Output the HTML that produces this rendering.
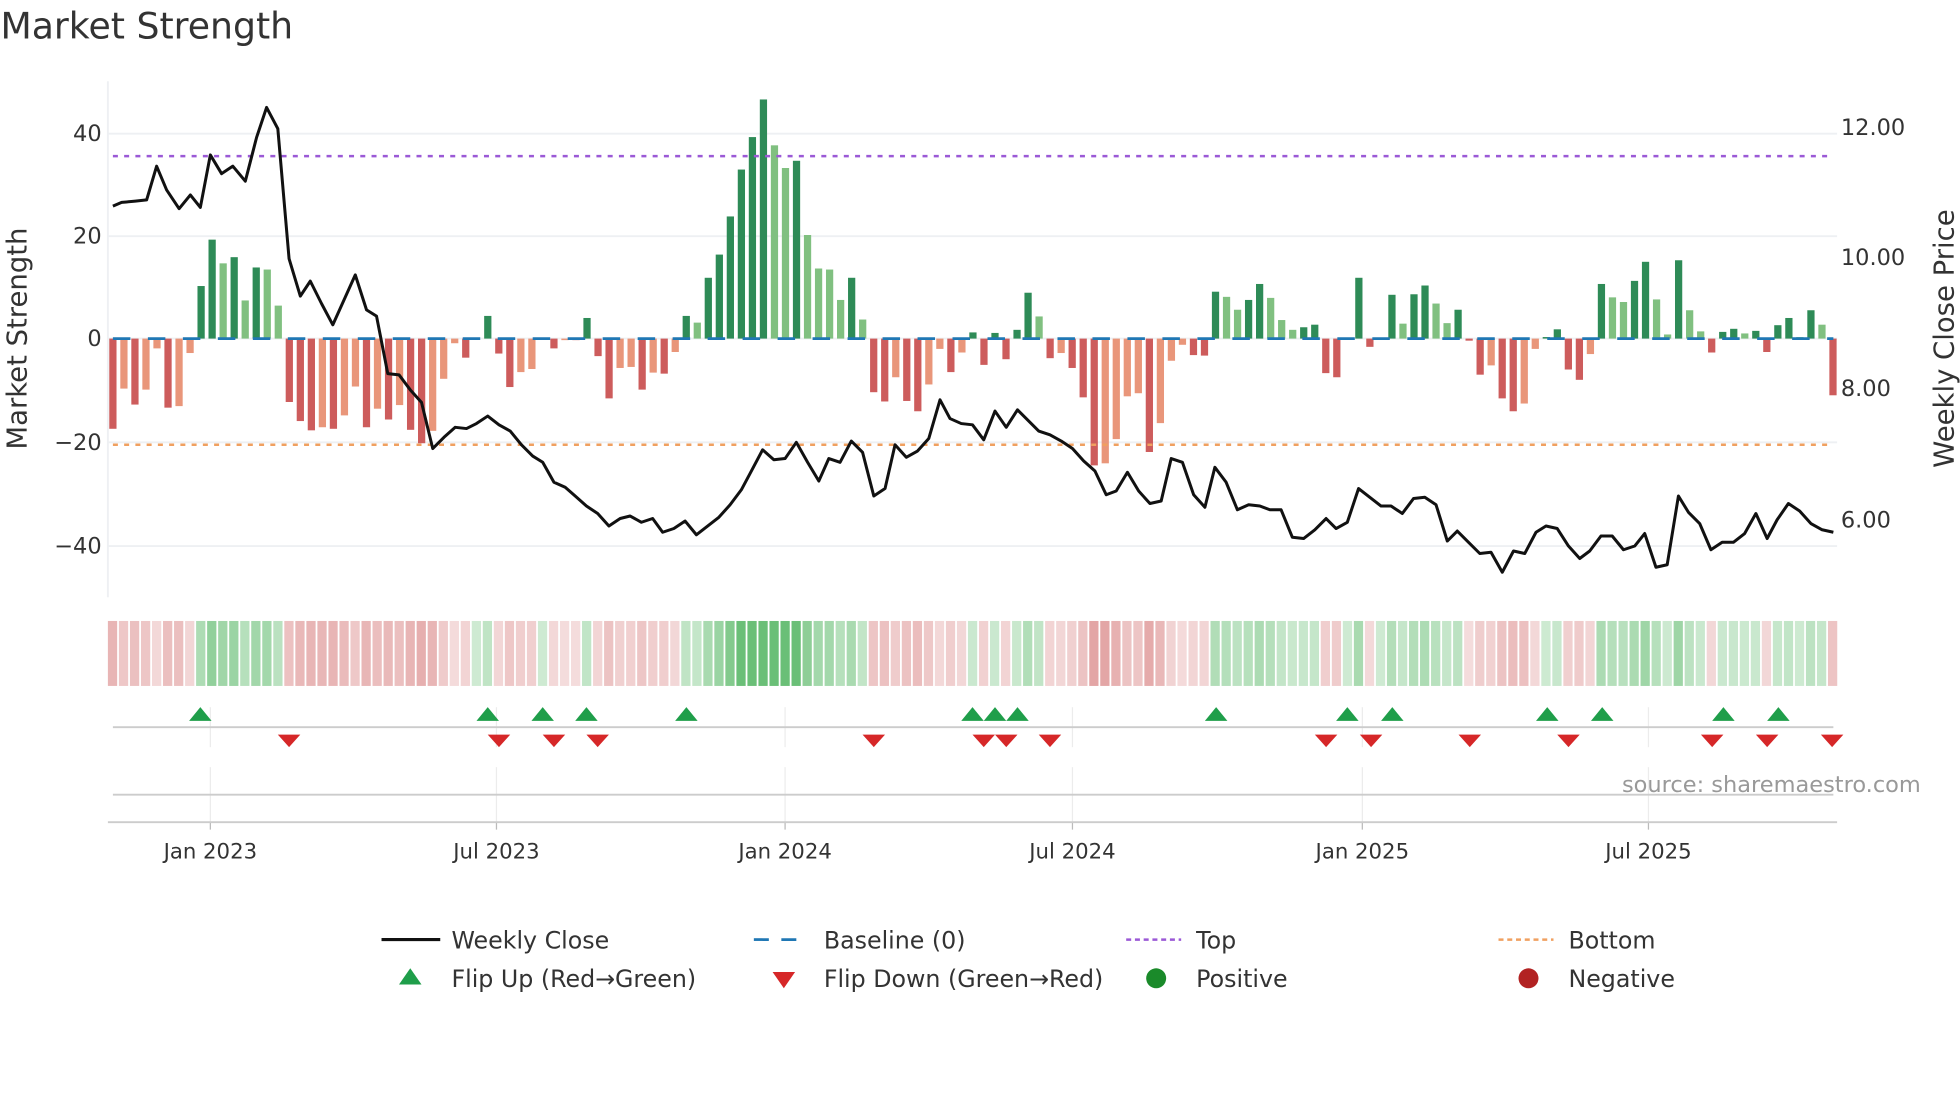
<!DOCTYPE html>
<html><head><meta charset="utf-8"><style>
html,body{margin:0;padding:0;background:#fff;width:1960px;height:1102px;overflow:hidden}
svg{display:block}
text{font-family:"DejaVu Sans","Liberation Sans",sans-serif;fill:#333}
</style></head><body>
<svg id="s" width="1960" height="1102" viewBox="0 0 1568 882" xmlns="http://www.w3.org/2000/svg">
<text x="0" y="31" font-size="29">Market Strength</text>
<g stroke="#eef0f3" stroke-width="1.5">
<line x1="86" y1="107" x2="1470" y2="107"/><line x1="86" y1="189" x2="1470" y2="189"/>
<line x1="86" y1="271" x2="1470" y2="271"/><line x1="86" y1="354" x2="1470" y2="354"/>
<line x1="86" y1="437" x2="1470" y2="437"/><line x1="86" y1="65" x2="86" y2="478"/>
</g>
<g font-size="18" text-anchor="end">
<text x="81" y="113">40</text><text x="81" y="195">20</text><text x="81" y="277">0</text>
<text x="81" y="360">−20</text><text x="81" y="443">−40</text></g>
<g font-size="18"><text x="1473" y="108">12.00</text><text x="1473" y="212">10.00</text>
<text x="1473" y="317">8.00</text><text x="1473" y="422">6.00</text></g>
<text font-size="22" transform="translate(21,271) rotate(-90)" text-anchor="middle">Market Strength</text>
<text font-size="22" transform="translate(1563,271) rotate(-90)" text-anchor="middle">Weekly Close Price</text>
<g id="bars"></g>
<line x1="90" y1="271" x2="1467" y2="271" stroke="#1f77b4" stroke-width="2.2" stroke-dasharray="14,14"/>
<line x1="90" y1="125" x2="1467" y2="125" stroke="#9b59d6" stroke-width="2" stroke-dasharray="4,5"/>
<line x1="90" y1="356" x2="1467" y2="356" stroke="#f0a060" stroke-width="2" stroke-dasharray="4,5"/>
<polyline id="price" fill="none" stroke="#111" stroke-width="2.4" stroke-linejoin="round"/>
<g id="strip"></g>
<g stroke="#ececec" stroke-width="1" id="vg"></g>
<line x1="90" y1="582" x2="1467" y2="582" stroke="#ccc" stroke-width="1.5"/>
<line x1="90" y1="636" x2="1467" y2="636" stroke="#ccc" stroke-width="1.5"/>
<line x1="86" y1="658" x2="1470" y2="658" stroke="#ccc" stroke-width="1.5"/>
<g id="mk"></g>
<text x="1537" y="634" font-size="18" text-anchor="end" style="fill:#999">source: sharemaestro.com</text>
<g font-size="17" text-anchor="middle">
<text x="168" y="687">Jan 2023</text><text x="397" y="687">Jul 2023</text><text x="628" y="687">Jan 2024</text>
<text x="858" y="687">Jul 2024</text><text x="1090" y="687">Jan 2025</text><text x="1319" y="687">Jul 2025</text></g>
<g font-size="19">
<line x1="305" y1="752" x2="352" y2="752" stroke="#111" stroke-width="2.5"/><text x="361" y="759">Weekly Close</text>
<line x1="603" y1="752" x2="647" y2="752" stroke="#1f77b4" stroke-width="2.2" stroke-dasharray="12,10"/><text x="659" y="759">Baseline (0)</text>
<line x1="901" y1="752" x2="945" y2="752" stroke="#9b59d6" stroke-width="2" stroke-dasharray="4,3"/><text x="957" y="759">Top</text>
<line x1="1199" y1="752" x2="1243" y2="752" stroke="#f0a060" stroke-width="2" stroke-dasharray="4,3"/><text x="1255" y="759">Bottom</text>
<polygon points="319,788 337,788 328,775" fill="#1f9e4a"/><text x="361" y="790">Flip Up (Red→Green)</text>
<polygon points="618,778 636,778 627,791" fill="#d62728"/><text x="659" y="790">Flip Down (Green→Red)</text>
<circle cx="925" cy="783" r="8" fill="#1a8a2a"/><text x="957" y="790">Positive</text>
<circle cx="1223" cy="783" r="8" fill="#b22222"/><text x="1255" y="790">Negative</text>
</g>
</svg>
<script>
var NS="http://www.w3.org/2000/svg";
function el(p,t,a){var e=document.createElementNS(NS,t);for(var k in a)e.setAttribute(k,a[k]);p.appendChild(e);return e;}
var V=[[-17.5,1],[-9.7,0],[-12.8,1],[-9.9,0],[-1.9,0],[-13.4,1],[-13.1,0],[-2.8,0],[10.2,1],[19.2,1],[14.6,0],[15.8,1],[7.4,0],[13.8,1],[13.4,0],[6.4,0],
[-12.3,1],[-16,1],[-17.8,1],[-17.2,0],[-17.5,1],[-14.9,0],[-9.3,0],[-17.2,1],[-13.6,0],[-15.7,1],[-12.9,0],[-17.7,1],[-20.3,1],[-17.9,0],[-7.8,0],[-0.9,0],
[-3.7,1],[0,1],[4.4,1],[-2.9,1],[-9.4,1],[-6.5,0],[-5.9,0],[0,1],[-1.9,1],[-0.3,0],[-0.3,1],[4,1],[-3.4,1],[-11.6,1],[-5.7,0],[-5.5,0],[-9.9,1],[-6.6,0],[-6.8,1],[-2.6,0],
[4.4,1],[3.1,0],[11.8,1],[16.3,1],[23.7,1],[32.8,1],[39.1,1],[46.4,1],[37.5,0],[33.1,0],[34.5,1],[20.1,0],[13.6,0],[13.4,0],[7.5,0],[11.8,1],[3.7,0],
[-10.4,1],[-12.2,1],[-7.5,0],[-12.1,1],[-14.1,1],[-8.9,0],[-2,0],[-6.5,1],[-2.7,0],[1.2,1],[-5.1,1],[1.1,1],[-4,1],[1.7,1],[8.9,1],[4.3,0],
[-3.8,1],[-2.8,0],[-5.7,1],[-11.4,1],[-24.6,1],[-24.2,0],[-19.5,0],[-11.2,0],[-10.6,0],[-22,1],[-16.4,0],[-4.3,0],[-1.2,0],[-3.2,1],[-3.3,1],
[9.1,1],[8.1,0],[5.6,0],[7.5,1],[10.6,1],[7.9,0],[3.6,0],[1.7,0],[2.2,1],[2.7,1],[-6.7,1],[-7.5,1],[0.2,1],[11.8,1],[-1.6,1],[0,1],[8.5,1],[2.9,0],[8.6,1],[10.3,1],[6.8,0],[3,0],[5.6,1],
[-0.4,1],[-7,1],[-5.2,0],[-11.6,1],[-14.1,1],[-12.6,0],[-2,0],[0.3,1],[1.8,1],[-6,1],[-8,1],[-3,0],[10.6,1],[8,0],[7.1,0],[11.2,1],[14.9,1],[7.6,0],[0.8,0],[15.2,1],[5.5,0],[1.4,0],
[-2.7,1],[1.3,1],[1.9,1],[1,0],[1.5,1],[-2.6,1],[2.6,1],[4,1],[0.3,0],[5.5,1],[2.7,0],[-11,1]];
var bars=document.getElementById('bars'),strip=document.getElementById('strip');
var pitch=(1466.7-90)/(V.length-1),U=4.125;
V.forEach(function(b,i){var x=90+i*pitch,v=b[0],h=Math.abs(v)*U;
 var c=v>=0?(b[1]?'#2e8b57':'#80c080'):(b[1]?'#cd5c5c':'#e9967a');
 if(h>0.3)el(bars,'rect',{x:x-2.9,y:v>=0?271-h:271,width:5.8,height:h,fill:c});
 var a=Math.min(0.85,0.28+Math.abs(v)/55);
 el(strip,'rect',{x:x-4,y:497,width:7.4,height:52,fill:v>=0?'rgba(80,180,95,'+a+')':'rgba(210,110,110,'+(a*0.85)+')'});
});
var P=[[90,165],[97,162],[108,161],[117,160],[125,133],[133,152],[143,167],[152,156],[160,166],[168,124],[177,139],[186,133],[196,145],[205,110],[213,86],[222,103],[231,207],[240,237],[248,225],[257,243],[266,260],[275,240],[284,220],[293,248],[301,253],[310,299],[319,300],[328,312],[337,322],[346,359],[355,350],[364,342],[373,343],[381,339],[390,333],[399,340],[408,345],[417,356],[426,365],[434,370],[443,386],[452,390],[460,397],[469,405],[478,411],[487,421],[496,415],[504,413],[513,418],[522,415],[530,426],[539,423],[548,417],[557,428],[566,421],[575,414],[584,404],[593,392],[601,377],[610,360],[619,368],[628,367],[637,354],[646,370],[655,385],[663,367],[672,370],[681,353],[690,362],[699,397],[708,391],[716,356],[725,366],[734,361],[743,351],[752,320],[760,335],[769,339],[778,340],[787,352],[796,329],[805,342],[814,328],[822,336],[831,345],[840,348],[849,353],[858,359],[867,369],[876,377],[885,396],[893,393],[902,378],[911,393],[920,403],[929,401],[937,367],[946,370],[955,396],[964,406],[972,374],[981,386],[990,408],[999,404],[1008,405],[1016,408],[1025,408],[1034,430],[1043,431],[1052,424],[1061,415],[1069,423],[1078,418],[1087,391],[1096,398],[1105,405],[1113,405],[1122,411],[1131,399],[1140,398],[1149,404],[1158,433],[1166,425],[1175,434],[1184,443],[1193,442],[1202,458],[1211,441],[1220,443],[1229,426],[1237,421],[1246,423],[1255,437],[1264,447],[1272,441],[1281,429],[1290,429],[1299,440],[1308,437],[1316,427],[1325,454],[1334,452],[1343,397],[1351,410],[1360,419],[1369,440],[1378,434],[1387,434],[1396,427],[1405,411],[1414,431],[1422,416],[1431,403],[1440,409],[1449,419],[1458,424],[1467,426]];
document.getElementById('price').setAttribute('points',P.map(function(p){return p.join(',')}).join(' '));
var vg=document.getElementById('vg');
[168,397,628,858,1090,1319].forEach(function(x){el(vg,'line',{x1:x,y1:566,x2:x,y2:598});el(vg,'line',{x1:x,y1:614,x2:x,y2:658});
 el(vg,'line',{x1:x,y1:658,x2:x,y2:664,stroke:'#bbb'});});
var mk=document.getElementById('mk');
[160,390,434,469,549,778,796,814,973,1078,1114,1238,1282,1379,1423].forEach(function(x){el(mk,'polygon',{points:(x-9)+',577 '+(x+9)+',577 '+x+',566',fill:'#1f9e4a'});});
[231,399,443,478,699,787,805,840,1061,1097,1176,1255,1370,1414,1466].forEach(function(x){el(mk,'polygon',{points:(x-9)+',588 '+(x+9)+',588 '+x+',598',fill:'#d62728'});});
</script>
</body></html>
